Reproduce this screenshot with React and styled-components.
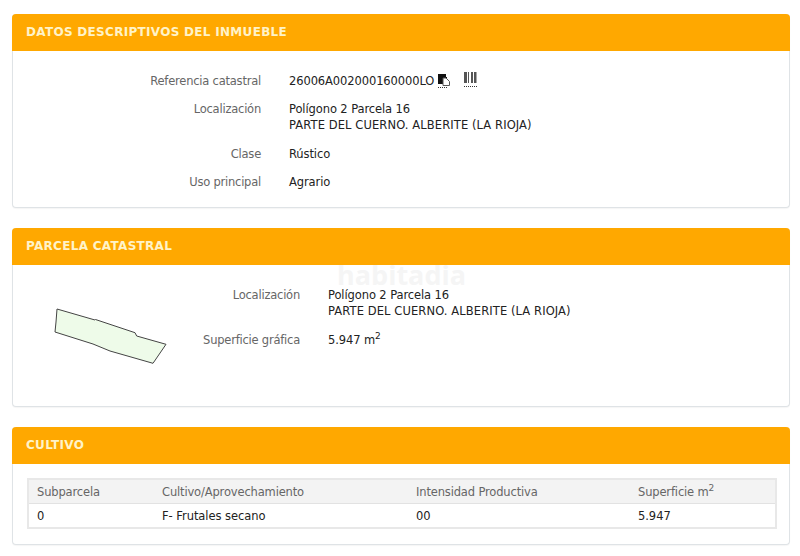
import styled, { createGlobalStyle } from "styled-components"

const GlobalStyle = createGlobalStyle`
    html, body {
        margin: 0;
        background: #fff;
    }
    body {
        font-family: "DejaVu Sans", Verdana, sans-serif;
        font-size: 11.5px;
        color: #222;
    }
`

const App = () => {
    return (
        <Page>
            <GlobalStyle />
            <Card>
                <CardHeader>DATOS DESCRIPTIVOS DEL INMUEBLE</CardHeader>
                <InfoList $labelWidth="248px" $padding="21px 0 17px">
                    <Label>Referencia catastral</Label>
                    <Value>
                        26006A002000160000LO
                        <CopyIcon />
                        <BarcodeIcon />
                    </Value>
                    <Label>Localización</Label>
                    <Address>
                        Polígono 2 Parcela 16
                        <br />
                        <Upper>PARTE DEL CUERNO. ALBERITE (LA RIOJA)</Upper>
                    </Address>
                    <Label>Clase</Label>
                    <Value>Rústico</Value>
                    <Label>Uso principal</Label>
                    <Value>Agrario</Value>
                </InfoList>
            </Card>

            <Card>
                <CardHeader>PARCELA CATASTRAL</CardHeader>
                <ParcelBody>
                    <ParcelMap viewBox="0 0 114 57">
                        <path
                            d="M3 1 L41 12 L41.5 11.5 L81 24.7 L82.7 28 L112 36.3 L99 55.3 L77 49 L56 43 L39 36 L1 24 L2 14 Z"
                            fill="#eefbe9"
                            stroke="#444"
                            strokeWidth="1"
                        />
                    </ParcelMap>
                    <InfoList $labelWidth="132px" $padding="0">
                        <Label>Localización</Label>
                        <Address>
                            Polígono 2 Parcela 16
                            <br />
                            <Upper>PARTE DEL CUERNO. ALBERITE (LA RIOJA)</Upper>
                        </Address>
                        <Label>Superficie gráfica</Label>
                        <Value>
                            5.947 m<Sup>2</Sup>
                        </Value>
                    </InfoList>
                </ParcelBody>
                <Watermark>habitadia</Watermark>
            </Card>

            <Card>
                <CardHeader>CULTIVO</CardHeader>
                <TableWrap>
                    <Table>
                        <colgroup>
                            <col width="125" />
                            <col width="254" />
                            <col width="222" />
                            <col width="147" />
                        </colgroup>
                        <thead>
                            <tr>
                                <Th>Subparcela</Th>
                                <Th>Cultivo/Aprovechamiento</Th>
                                <Th>Intensidad Productiva</Th>
                                <Th>
                                    Superficie m<Sup>2</Sup>
                                </Th>
                            </tr>
                        </thead>
                        <tbody>
                            <tr>
                                <Td>0</Td>
                                <Td>F- Frutales secano</Td>
                                <Td>00</Td>
                                <Td>5.947</Td>
                            </tr>
                        </tbody>
                    </Table>
                </TableWrap>
            </Card>
        </Page>
    )
}

const CopyIcon = () => (
    <DocIcon viewBox="0 0 14 16">
        <path d="M1 1 H9 V4 H10 V11 H1 Z" fill="#111" />
        <path d="M6 5 H9 L12.5 8.5 V12.5 H6 Z" fill="#fff" stroke="#555" strokeWidth="1" />
        <path d="M1 14.5 H11" stroke="#333" strokeWidth="1" strokeDasharray="1 1" />
    </DocIcon>
)

const BarcodeIcon = () => (
    <BarIcon viewBox="0 0 14 16">
        <path d="M1 0 H4 V11 H1 Z M5 0 H6 V11 H5 Z M8 0 H10 V11 H8 Z M11 0 H13.5 V11 H11 Z" fill="#555" />
        <path d="M1 14.5 H14" stroke="#333" strokeWidth="1" strokeDasharray="1 1" />
    </BarIcon>
)

const Page = styled.div`
    display: flex;
    flex-direction: column;
    gap: 20px;
    width: 778px;
    padding: 14px 10px 12px 12px;
`

const Card = styled.section`
    position: relative;
    border: 1px solid #dfe3e6;
    border-top: 0;
    border-radius: 4px;
    background: #fff;
    box-shadow: 0 1px 1px rgba(0, 0, 0, 0.04);
`

const CardHeader = styled.h2`
    margin: 0 -1px;
    height: 37px;
    padding-left: 14px;
    line-height: 37px;
    border-radius: 4px 4px 0 0;
    background: #ffa800;
    color: #fff3c8;
    font-size: 12px;
    font-weight: 700;
    letter-spacing: 0.3px;
`

const InfoList = styled.div`
    display: grid;
    grid-template-columns: ${(props) => props.$labelWidth} 1fr;
    align-content: start;
    align-items: baseline;
    column-gap: 28px;
    row-gap: 12px;
    padding: ${(props) => props.$padding};
    line-height: 16px;
`

const Label = styled.div`
    text-align: right;
    color: #666;
    letter-spacing: -0.22px;
`

const Value = styled.div`
    color: #222;
    letter-spacing: -0.1px;
`

const Address = styled(Value)`
    padding-bottom: 1px;
`

const Upper = styled.span`
    letter-spacing: 0.1px;
`

const Sup = styled.sup`
    font-size: 9px;
    line-height: 0;
`

const DocIcon = styled.svg`
    width: 14px;
    height: 16px;
    margin-left: 3px;
    vertical-align: -4px;
`

const BarIcon = styled.svg`
    width: 14px;
    height: 16px;
    margin-left: 12px;
    vertical-align: -3px;
`

const ParcelBody = styled.div`
    display: flex;
    align-items: flex-start;
    padding: 22px 0 41px 41px;
`

const ParcelMap = styled.svg`
    flex: none;
    width: 114px;
    height: 57px;
    margin-top: 21px;
`

const Watermark = styled.div`
    position: absolute;
    left: 324px;
    top: 34px;
    color: rgba(235, 235, 235, 0.5);
    font-family: "Open Sans", sans-serif;
    font-size: 27px;
    line-height: 26px;
    font-weight: 700;
    pointer-events: none;
`

const TableWrap = styled.div`
    padding: 14px 14px 15px;
`

const Table = styled.table`
    width: 748px;
    table-layout: fixed;
    border-collapse: collapse;
    border: 2px solid #e8e8e8;
`

const Th = styled.th`
    height: 23px;
    padding: 0 9px;
    text-align: left;
    font-weight: 400;
    color: #666;
    background: #f3f3f3;
    border-bottom: 1px solid #e2e2e2;
    letter-spacing: -0.15px;

    &:first-child {
        padding-left: 8px;
    }
`

const Td = styled.td`
    height: 23px;
    padding: 0 9px;
    color: #222;
    letter-spacing: -0.05px;

    &:first-child {
        padding-left: 8px;
    }
`

export default App
